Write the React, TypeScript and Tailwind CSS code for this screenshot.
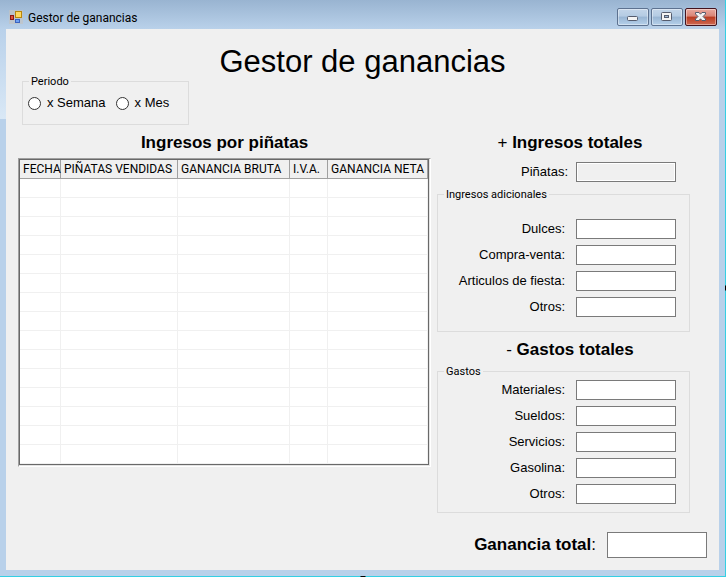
import React from "react";

const columns = [
  { name: "FECHA", width: "w-[41px]" },
  { name: "PIÑATAS VENDIDAS", width: "w-[117px]" },
  { name: "GANANCIA BRUTA", width: "w-[112px]" },
  { name: "I.V.A.", width: "w-[38px]" },
  { name: "GANANCIA NETA", width: "" },
];
const extraIncome = ["Dulces:", "Compra-venta:", "Articulos de fiesta:", "Otros:"];
const expenses = ["Materiales:", "Sueldos:", "Servicios:", "Gasolina:", "Otros:"];

function Field({ id, label }: { id: string; label: string }) {
  return (
    <div className="flex items-center gap-[11px]">
      <label htmlFor={id} className="w-[127px] text-right text-[13px] leading-4">
        {label}
      </label>
      <input id={id} type="text" className="h-5 w-[100px] border border-[#7a7a7a] bg-white px-1 text-[13px] outline-none" />
    </div>
  );
}

function Legend({ children }: { children: React.ReactNode }) {
  return <legend className="ml-1.5 px-0.5 pt-0.5 font-['Roboto',sans-serif] text-[11px] leading-3">{children}</legend>;
}

function Heading({ children }: { children: React.ReactNode }) {
  return <h2 className="text-center text-[17px] leading-5 font-bold">{children}</h2>;
}

function CaptionButton({ label, close, children }: { label: string; close?: boolean; children: React.ReactNode }) {
  const tone = close
    ? "border-[#43141f] bg-[linear-gradient(#e9a99f,#d98476_45%,#b93a20_50%,#cf6a54)]"
    : "border-[#5d7290] bg-[linear-gradient(#c3d5e9,#b4cbe3_45%,#98b5d3_50%,#b5d0ea)]";
  return (
    <button aria-label={label} className={"flex h-[18px] w-8 items-center justify-center rounded-[2px] border shadow-[inset_0_0_0_1px_rgba(255,255,255,0.4)] " + tone}>
      {children}
    </button>
  );
}

export default function App() {
  return (
    <div className="relative flex min-h-screen flex-col border-r border-b border-[#35cfe3] bg-[#b9d1ea] font-['Liberation_Sans',Arial,sans-serif] text-black">
      <header className="flex h-[29px] items-start bg-linear-to-b from-[#99b4d1] to-[#b9d1ea] pt-2 pr-2 pl-[9px]">
        <svg width="14" height="18" viewBox="0 0 14 18" aria-hidden="true">
          <rect x="0" y="2" width="14" height="14" fill="#c3c3c3" opacity="0.7" />
          <rect x="1.5" y="7.500" width="3" height="4" fill="#e0503c" stroke="#8d1b16" />
          <rect x="6.500" y="3.500" width="6" height="6" fill="#ffd860" stroke="#b8860b" />
          <rect x="6.500" y="11.500" width="4" height="3" fill="#6fa0f0" stroke="#3a63c0" />
        </svg>
        <span className="ml-[5px] flex-1 font-['Roboto',sans-serif] text-[12px] leading-5">Gestor de ganancias</span>
        <div className="flex gap-0.5">
          <CaptionButton label="Minimizar">
            <svg width="12" height="12" viewBox="0 0 12 12"><rect x="0.5" y="5.500" width="10" height="4" rx="1" fill="#f4f4f4" stroke="#555c6e" /></svg>
          </CaptionButton>
          <CaptionButton label="Maximizar">
            <svg width="12" height="12" viewBox="0 0 12 12"><rect x="0.5" y="1.500" width="10" height="8" rx="1" fill="#f4f4f4" stroke="#555c6e" /><rect x="3.500" y="4.500" width="4" height="2" fill="#9db7d5" stroke="#555c6e" /></svg>
          </CaptionButton>
          <CaptionButton label="Cerrar" close>
            <svg width="12" height="12" viewBox="0 0 12 12"><path d="M0.500 1.500H4L5.500 3.200 7 1.500H10.500V3L8 5.500 10.500 8V9.500H7L5.500 7.800 4 9.500H0.500V8L3 5.500 0.500 3Z" fill="#f4f4f4" stroke="#555c6e" /></svg>
          </CaptionButton>
        </div>
      </header>

      <div className="flex flex-1 bg-linear-to-b from-[#b9d1ea] to-[#d9e8f6] bg-[length:6px_90px] bg-no-repeat px-1.5 pb-1.5">
        <main className="flex-1 bg-[#f0f0f0] px-3 pt-5 pb-3">
          <h1 className="text-center text-[31px] leading-[25px]">Gestor de ganancias</h1>

          <fieldset className="ml-1 h-[51px] w-[167px] border border-[#dcdcdc]">
            <Legend>Periodo</Legend>
            <div className="flex gap-2.5 px-[5px] pt-[7px] text-[13px] leading-4">
              {["x Semana", "x Mes"].map((name) => (
                <label key={name} className="flex items-center gap-1.5">
                  <input type="radio" name="periodo" className="size-[13px] appearance-none rounded-full border border-[#333] bg-white checked:border-4" />
                  {name}
                </label>
              ))}
            </div>
          </fieldset>

          <div className="mt-2 flex gap-1.5">
            <section className="flex-1">
              <Heading>Ingresos por piñatas</Heading>
              <div className="mt-[5px] border border-t-[#a0a0a0] border-r-white border-b-white border-l-[#a0a0a0]">
                <div className="border-r border-b border-[#e3e3e3]">
                  <div className="border border-[#696969] bg-white">
                    <table className="w-full table-fixed border-separate border-spacing-0">
                      <thead>
                        <tr>
                          {columns.map((c) => (
                            <th key={c.name} className={"h-[19px] border-r border-b border-[#a0a0a0] bg-[#f0f0f0] p-0 pl-[3px] text-left font-['Roboto',sans-serif] text-[12px] leading-4 font-normal whitespace-nowrap " + c.width}>
                              {c.name}
                            </th>
                          ))}
                        </tr>
                      </thead>
                      <tbody>
                        {Array.from({ length: 15 }, (_, row) => (
                          <tr key={row}>
                            {columns.map((c) => (
                              <td key={c.name} className="h-[19px] border-r border-b border-[#f0f0f0] p-0" />
                            ))}
                          </tr>
                        ))}
                      </tbody>
                    </table>
                  </div>
                </div>
              </div>
            </section>

            <section className="w-[270px]">
              <div className="pr-1">
                <Heading><span className="font-normal">+</span> Ingresos totales</Heading>
              </div>
              <div className="mt-[9px] flex items-center gap-2">
                <label htmlFor="pinatas" className="w-[131px] text-right text-[13px] leading-4">Piñatas:</label>
                <input id="pinatas" type="text" readOnly className="h-5 w-[100px] border border-[#7a7a7a] bg-[#f0f0f0] px-1 text-[13px] shadow-[inset_0_0_0_1px_#fff] outline-none" />
              </div>
              <fieldset className="mt-[5px] w-[253px] border border-[#dcdcdc] pt-[18px] pb-3.5">
                <Legend>Ingresos adicionales</Legend>
                <div className="flex flex-col gap-1.5">
                  {extraIncome.map((name, i) => <Field key={name} id={"ingreso-" + i} label={name} />)}
                </div>
              </fieldset>
              <div className="mt-2 pr-1">
                <Heading><span className="font-normal">-</span> Gastos totales</Heading>
              </div>
              <fieldset className="mt-1 w-[253px] border border-[#dcdcdc] pt-0.5 pb-2">
                <Legend>Gastos</Legend>
                <div className="flex flex-col gap-1.5">
                  {expenses.map((name, i) => <Field key={name} id={"gasto-" + i} label={name} />)}
                </div>
              </fieldset>
              <div className="mt-[19px] flex items-center justify-end gap-[11px]">
                <label htmlFor="total" className="text-[17px] leading-5 font-bold">Ganancia total<span className="font-normal">:</span></label>
                <input id="total" type="text" className="h-[26px] w-[100px] border border-[#7a7a7a] bg-white px-1 text-[17px] outline-none" />
              </div>
            </section>
          </div>
        </main>
      </div>
      <span className="absolute -bottom-px left-1/2 h-px w-[5px] -translate-x-1/2 bg-black" />
      <span className="absolute top-1/2 -right-px h-[5px] w-px -translate-y-1/2 bg-black" />
    </div>
  );
}
